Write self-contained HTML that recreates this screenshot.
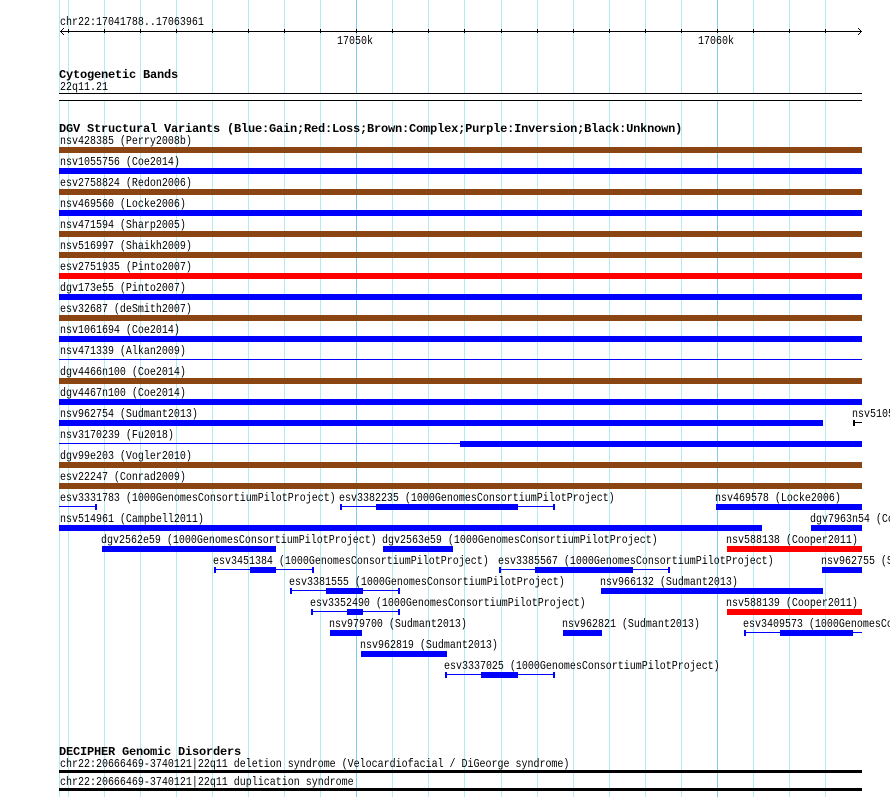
<!DOCTYPE html>
<html><head><meta charset="utf-8"><style>
html,body{margin:0;padding:0;background:#fff;width:890px;height:797px;overflow:hidden}
svg{display:block}
text{font-family:"Liberation Mono",monospace;font-size:12px;fill:#000;white-space:pre;transform-box:fill-box;transform-origin:0 50%;transform:scaleX(.8333)}
text.b{font-weight:bold;font-size:12px;letter-spacing:-.2px;transform:none}
rect,path{shape-rendering:crispEdges}
.g{fill:#b2ecf0}.d{fill:#7fcdee}
.u{fill:#0000ff}.r{fill:#ff0000}.n{fill:#8b4513}.k{fill:#000}
</style></head><body>
<svg width="890" height="797" viewBox="0 0 890 797" xmlns="http://www.w3.org/2000/svg">
<g class="g">
<rect x="59" y="0" width="1" height="797"/><rect x="68" y="0" width="1" height="797"/><rect x="104" y="0" width="1" height="797"/><rect x="140" y="0" width="1" height="797"/><rect x="176" y="0" width="1" height="797"/><rect x="212" y="0" width="1" height="797"/><rect x="248" y="0" width="1" height="797"/><rect x="284" y="0" width="1" height="797"/><rect x="320" y="0" width="1" height="797"/><rect x="392" y="0" width="1" height="797"/><rect x="428" y="0" width="1" height="797"/><rect x="464" y="0" width="1" height="797"/><rect x="501" y="0" width="1" height="797"/><rect x="537" y="0" width="1" height="797"/><rect x="573" y="0" width="1" height="797"/><rect x="609" y="0" width="1" height="797"/><rect x="645" y="0" width="1" height="797"/><rect x="681" y="0" width="1" height="797"/><rect x="753" y="0" width="1" height="797"/><rect x="789" y="0" width="1" height="797"/><rect x="825" y="0" width="1" height="797"/>
</g>
<rect class="d" x="356" y="0" width="1" height="797"/><rect class="d" x="717" y="0" width="1" height="797"/>

<!-- scale -->
<text x="60" y="25">chr22:17041788..17063961</text>
<g class="k">
<rect x="60" y="31" width="802" height="1"/>
<rect x="68" y="29" width="1" height="4"/><rect x="104" y="29" width="1" height="4"/><rect x="140" y="29" width="1" height="4"/><rect x="176" y="29" width="1" height="4"/><rect x="212" y="29" width="1" height="4"/><rect x="248" y="29" width="1" height="4"/><rect x="284" y="29" width="1" height="4"/><rect x="320" y="29" width="1" height="4"/><rect x="356" y="29" width="1" height="4"/><rect x="392" y="29" width="1" height="4"/><rect x="428" y="29" width="1" height="4"/><rect x="464" y="29" width="1" height="4"/><rect x="501" y="29" width="1" height="4"/><rect x="537" y="29" width="1" height="4"/><rect x="573" y="29" width="1" height="4"/><rect x="609" y="29" width="1" height="4"/><rect x="645" y="29" width="1" height="4"/><rect x="681" y="29" width="1" height="4"/><rect x="717" y="29" width="1" height="4"/><rect x="753" y="29" width="1" height="4"/><rect x="789" y="29" width="1" height="4"/><rect x="825" y="29" width="1" height="4"/>
<rect x="61" y="30" width="1" height="3"/><rect x="62" y="29" width="1" height="1"/><rect x="62" y="33" width="1" height="1"/><rect x="63" y="28" width="1" height="1"/><rect x="63" y="34" width="1" height="1"/>
<rect x="860" y="30" width="1" height="3"/><rect x="859" y="29" width="1" height="1"/><rect x="859" y="33" width="1" height="1"/><rect x="858" y="28" width="1" height="1"/><rect x="858" y="34" width="1" height="1"/>
</g>
<text x="337" y="44">17050k</text>
<text x="698" y="44">17060k</text>

<!-- cytobands -->
<text class="b" x="59" y="78">Cytogenetic Bands</text>
<text x="60" y="90">22q11.21</text>
<rect x="59" y="93" width="803" height="8" fill="#fff"/>
<rect class="k" x="59" y="93" width="803" height="1"/>
<rect class="k" x="59" y="100" width="803" height="1"/>

<!-- DGV -->
<text class="b" x="59" y="132">DGV Structural Variants (Blue:Gain;Red:Loss;Brown:Complex;Purple:Inversion;Black:Unknown)</text>

<text x="60" y="144">nsv428385 (Perry2008b)</text><rect class="n" x="59" y="147" width="803" height="6"/>
<text x="60" y="165">nsv1055756 (Coe2014)</text><rect class="u" x="59" y="168" width="803" height="6"/>
<text x="60" y="186">esv2758824 (Redon2006)</text><rect class="n" x="59" y="189" width="803" height="6"/>
<text x="60" y="207">nsv469560 (Locke2006)</text><rect class="u" x="59" y="210" width="803" height="6"/>
<text x="60" y="228">nsv471594 (Sharp2005)</text><rect class="n" x="59" y="231" width="803" height="6"/>
<text x="60" y="249">nsv516997 (Shaikh2009)</text><rect class="n" x="59" y="252" width="803" height="6"/>
<text x="60" y="270">esv2751935 (Pinto2007)</text><rect class="r" x="59" y="273" width="803" height="6"/>
<text x="60" y="291">dgv173e55 (Pinto2007)</text><rect class="u" x="59" y="294" width="803" height="6"/>
<text x="60" y="312">esv32687 (deSmith2007)</text><rect class="n" x="59" y="315" width="803" height="6"/>
<text x="60" y="333">nsv1061694 (Coe2014)</text><rect class="u" x="59" y="336" width="803" height="6"/>
<text x="60" y="354">nsv471339 (Alkan2009)</text><rect class="u" x="59" y="359" width="803" height="1"/>
<text x="60" y="375">dgv4466n100 (Coe2014)</text><rect class="n" x="59" y="378" width="803" height="6"/>
<text x="60" y="396">dgv4467n100 (Coe2014)</text><rect class="u" x="59" y="399" width="803" height="6"/>
<text x="60" y="417">nsv962754 (Sudmant2013)</text><rect class="u" x="59" y="420" width="764" height="6"/>
<text x="852" y="417">nsv510538 (Coe2014)</text><rect class="k" x="853" y="420" width="2" height="6"/><rect class="k" x="853" y="422" width="9" height="1"/>
<text x="60" y="438">nsv3170239 (Fu2018)</text><rect class="u" x="59" y="443" width="401" height="1"/><rect class="u" x="460" y="441" width="402" height="6"/>
<text x="60" y="459">dgv99e203 (Vogler2010)</text><rect class="n" x="59" y="462" width="803" height="6"/>
<text x="60" y="480">esv22247 (Conrad2009)</text><rect class="n" x="59" y="483" width="803" height="6"/>

<!-- row 504 -->
<text x="60" y="501">esv3331783 (1000GenomesConsortiumPilotProject)</text>
<rect class="u" x="59" y="506" width="37" height="1"/><rect class="u" x="95" y="504" width="2" height="6"/>
<text x="339" y="501">esv3382235 (1000GenomesConsortiumPilotProject)</text>
<rect class="u" x="340" y="504" width="2" height="6"/><rect class="u" x="340" y="506" width="214" height="1"/><rect class="u" x="376" y="504" width="142" height="6"/><rect class="u" x="553" y="504" width="2" height="6"/>
<text x="715" y="501">nsv469578 (Locke2006)</text><rect class="u" x="716" y="504" width="146" height="6"/>

<!-- row 525 -->
<text x="60" y="522">nsv514961 (Campbell2011)</text><rect class="u" x="59" y="525" width="703" height="6"/>
<text x="810" y="522">dgv7963n54 (Coe2014)</text><rect class="u" x="811" y="525" width="51" height="6"/>

<!-- row 546 -->
<text x="101" y="543">dgv2562e59 (1000GenomesConsortiumPilotProject)</text><rect class="u" x="102" y="546" width="174" height="6"/>
<text x="382" y="543">dgv2563e59 (1000GenomesConsortiumPilotProject)</text><rect class="u" x="383" y="546" width="70" height="6"/>
<text x="726" y="543">nsv588138 (Cooper2011)</text><rect class="r" x="727" y="546" width="135" height="6"/>

<!-- row 567 -->
<text x="213" y="564">esv3451384 (1000GenomesConsortiumPilotProject)</text>
<rect class="u" x="214" y="567" width="2" height="6"/><rect class="u" x="214" y="569" width="99" height="1"/><rect class="u" x="250" y="567" width="26" height="6"/><rect class="u" x="312" y="567" width="2" height="6"/>
<text x="498" y="564">esv3385567 (1000GenomesConsortiumPilotProject)</text>
<rect class="u" x="499" y="567" width="2" height="6"/><rect class="u" x="499" y="569" width="170" height="1"/><rect class="u" x="535" y="567" width="98" height="6"/><rect class="u" x="668" y="567" width="2" height="6"/>
<text x="821" y="564">nsv962755 (Sudmant2013)</text><rect class="u" x="822" y="567" width="40" height="6"/>

<!-- row 588 -->
<text x="289" y="585">esv3381555 (1000GenomesConsortiumPilotProject)</text>
<rect class="u" x="290" y="588" width="2" height="6"/><rect class="u" x="290" y="590" width="109" height="1"/><rect class="u" x="326" y="588" width="37" height="6"/><rect class="u" x="398" y="588" width="2" height="6"/>
<text x="600" y="585">nsv966132 (Sudmant2013)</text><rect class="u" x="601" y="588" width="222" height="6"/>

<!-- row 609 -->
<text x="310" y="606">esv3352490 (1000GenomesConsortiumPilotProject)</text>
<rect class="u" x="311" y="609" width="2" height="6"/><rect class="u" x="311" y="611" width="88" height="1"/><rect class="u" x="347" y="609" width="16" height="6"/><rect class="u" x="398" y="609" width="2" height="6"/>
<text x="726" y="606">nsv588139 (Cooper2011)</text><rect class="r" x="727" y="609" width="135" height="6"/>

<!-- row 630 -->
<text x="329" y="627">nsv979700 (Sudmant2013)</text><rect class="u" x="330" y="630" width="32" height="6"/>
<text x="562" y="627">nsv962821 (Sudmant2013)</text><rect class="u" x="563" y="630" width="39" height="6"/>
<text x="743" y="627">esv3409573 (1000GenomesConsortiumPilotProject)</text>
<rect class="u" x="744" y="630" width="2" height="6"/><rect class="u" x="744" y="632" width="118" height="1"/><rect class="u" x="780" y="630" width="73" height="6"/>

<!-- row 651 -->
<text x="360" y="648">nsv962819 (Sudmant2013)</text><rect class="u" x="361" y="651" width="86" height="6"/>

<!-- row 672 -->
<text x="444" y="669">esv3337025 (1000GenomesConsortiumPilotProject)</text>
<rect class="u" x="445" y="672" width="2" height="6"/><rect class="u" x="445" y="674" width="109" height="1"/><rect class="u" x="481" y="672" width="37" height="6"/><rect class="u" x="553" y="672" width="2" height="6"/>

<!-- DECIPHER -->
<text class="b" x="59" y="755">DECIPHER Genomic Disorders</text>
<text x="60" y="767">chr22:20666469-3740121|22q11 deletion syndrome (Velocardiofacial / DiGeorge syndrome)</text>
<rect class="k" x="59" y="770" width="803" height="3"/>
<text x="60" y="785">chr22:20666469-3740121|22q11 duplication syndrome</text>
<rect class="k" x="59" y="788" width="803" height="3"/>
</svg>
</body></html>
